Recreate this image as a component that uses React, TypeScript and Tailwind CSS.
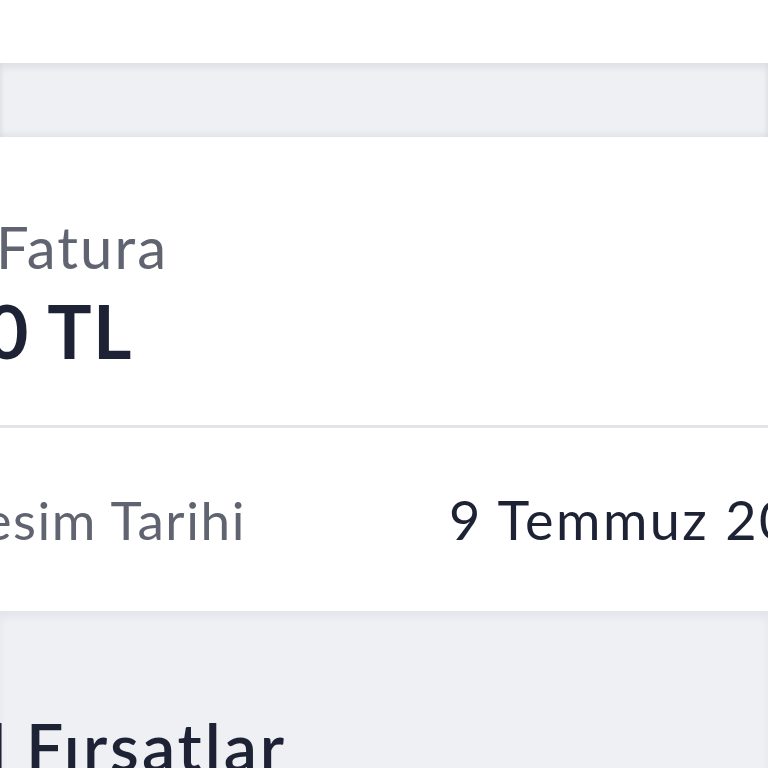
export default function App() {
  return (
    <div className="h-[768px] w-[768px] overflow-hidden bg-white font-['Lato','Noto_Sans',sans-serif]">
      {/* Top white strip */}
      <div className="h-[63px] bg-white" />

      {/* Gray separator */}
      <div className="h-[74px] bg-[#eff0f4] shadow-[inset_0_5px_6px_rgba(30,34,55,0.07),inset_0_-4px_5px_rgba(30,34,55,0.05)]" />

      {/* Invoice card */}
      <div className="bg-white">
        <div className="h-[288px] relative">
          <div className="absolute left-0 top-[81px] flex w-[168px] justify-end whitespace-nowrap text-[58px] leading-none tracking-[0.035em] text-[#5f6470]">
            Son Fatura
          </div>
          <div className="absolute left-0 top-[157px] flex w-[133px] justify-end whitespace-nowrap text-[74px] font-bold leading-none tracking-[0.02em] text-[#1e2235]">
            120 TL
          </div>
        </div>
        <div className="h-[3px] bg-[#e3e4e8]" />
        <div className="flex h-[183px] items-center whitespace-nowrap text-[54px] leading-none">
          <div className="flex w-[246px] justify-end text-[53px] tracking-[0.03em] text-[#5f6470]">Fatura Kesim Tarihi</div>
          <div className="ml-[203px] tracking-[0.045em] text-[#1e2235]">9 Temmuz 2021</div>
        </div>
      </div>

      {/* Offers section */}
      <div className="h-[158px] bg-[#eff0f4] shadow-[inset_0_6px_8px_rgba(30,34,55,0.05)]">
        <div className="flex whitespace-nowrap pt-[102px] text-[66px] font-semibold leading-none tracking-[0.045em] text-[#1e2235]">
          <div className="flex w-[9px] shrink-0 justify-end">Size Özel</div>
          <div className="ml-[17px]">Fırsatlar</div>
        </div>
      </div>
    </div>
  );
}
